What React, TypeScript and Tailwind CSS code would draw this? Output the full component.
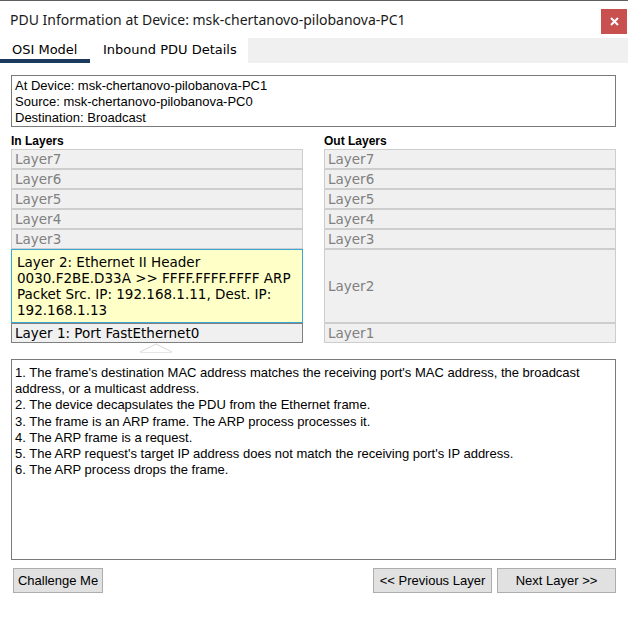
import React from 'react';

const verdana = { fontFamily: '"DejaVu Sans", Verdana, sans-serif' };
const arial = { fontFamily: '"Liberation Sans", Arial, sans-serif' };

const upper = ['Layer7', 'Layer6', 'Layer5', 'Layer4', 'Layer3'];

const descLines = [
  "1. The frame's destination MAC address matches the receiving port's MAC address, the broadcast",
  'address, or a multicast address.',
  '2. The device decapsulates the PDU from the Ethernet frame.',
  '3. The frame is an ARP frame. The ARP process processes it.',
  '4. The ARP frame is a request.',
  "5. The ARP request's target IP address does not match the receiving port's IP address.",
  '6. The ARP process drops the frame.',
];

function LayerRow({ label }: { label: string }) {
  return (
    <div className="h-[20px] border border-[#cdcdcd] bg-[#f0f0f0] pl-[3px] text-[13.5px] leading-[18px] text-[#808080]" style={verdana}>
      {label}
    </div>
  );
}

function Button({ children, className }: { children: React.ReactNode; className?: string }) {
  return (
    <button
      className={`h-[25px] border border-[#adadad] bg-[#e1e1e1] text-[13px] text-black ${className ?? ''}`}
      style={arial}
    >
      {children}
    </button>
  );
}

export default function App() {
  return (
    <div className="w-[628px] h-[622px] bg-white border-t border-[#5f5f5f] overflow-hidden">
      {/* Title bar */}
      <div className="h-[37px] flex items-start justify-between">
        <div className="pl-[10px] pt-[9px] text-[14px] leading-[20px] text-[#1a1a1a]" style={{ fontFamily: '"Noto Sans", "Open Sans", sans-serif' }}>
          PDU Information at Device: msk-chertanovo-pilobanova-PC1
        </div>
        <div className="mt-[8px] mr-[1px] w-[26px] h-[25px] bg-[#c85150] flex items-center justify-center">
          <svg width="9" height="9" viewBox="0 0 9 9">
            <path d="M1 1 L8 8 M8 1 L1 8" stroke="white" strokeWidth="2" />
          </svg>
        </div>
      </div>

      {/* Tabs */}
      <div className="h-[25px] flex text-[13px] text-black" style={verdana}>
        <div className="w-[90px] border-b-4 border-[#1c3a5e] pl-[12px] pt-[3px] leading-[18px]">OSI Model</div>
        <div className="w-[158px] pl-[13px] pt-[3px] leading-[18px]">Inbound PDU Details</div>
        <div className="flex-1 bg-[#f0f0f0]" />
      </div>

      <div className="pl-[11px] pr-[12px]">
        {/* Device info */}
        <div className="mt-[12px] h-[52px] border border-[#7a7a7a] px-[3px] pt-[2px] text-[13px] leading-[16px] text-black" style={arial}>
          <div>At Device: msk-chertanovo-pilobanova-PC1</div>
          <div>Source: msk-chertanovo-pilobanova-PC0</div>
          <div>Destination: Broadcast</div>
        </div>

        {/* Layers */}
        <div className="mt-[6px] flex gap-[21px]">
          <div className="w-[292px]">
            <div className="h-[16px] text-[12px] font-bold leading-[16px] text-black" style={arial}>In Layers</div>
            {upper.map((l) => (
              <LayerRow key={l} label={l} />
            ))}
            <div className="h-[74px] border border-[#3aa7d9] bg-[#ffffc8] pl-[5px] pt-[4px] text-[13.5px] leading-[16px] text-black" style={verdana}>
              <div>Layer 2: Ethernet II Header</div>
              <div>0030.F2BE.D33A &gt;&gt; FFFF.FFFF.FFFF ARP</div>
              <div>Packet Src. IP: 192.168.1.11, Dest. IP:</div>
              <div>192.168.1.13</div>
            </div>
            <div className="h-[20px] border border-[#7f7f7f] bg-[#f0f0f0] pl-[3px] text-[13.5px] leading-[18px] text-black" style={verdana}>
              Layer 1: Port FastEthernet0
            </div>
            <div className="h-[16px] flex justify-center">
              <svg width="34" height="10" viewBox="0 0 34 10" className="ml-[-2px]">
                <path d="M1 9 L17 1 L33 9" fill="none" stroke="#d9d9d9" strokeWidth="1" />
                <path d="M1 9.5 H33" stroke="#e6e6e6" strokeWidth="1" />
              </svg>
            </div>
          </div>

          <div className="w-[292px]">
            <div className="h-[16px] text-[12px] font-bold leading-[16px] text-black" style={arial}>Out Layers</div>
            {upper.map((l) => (
              <LayerRow key={l} label={l} />
            ))}
            <div className="h-[74px] border border-[#cdcdcd] bg-[#f0f0f0] pl-[3px] flex items-center text-[13.5px] text-[#808080]" style={verdana}>
              Layer2
            </div>
            <LayerRow label="Layer1" />
          </div>
        </div>

        {/* Description */}
        <div className="h-[201px] border border-[#7a7a7a] px-[3px] pt-[5px] text-[13px] leading-[16.2px] text-black" style={arial}>
          {descLines.map((d) => (
            <div key={d}>{d}</div>
          ))}
        </div>

        {/* Buttons */}
        <div className="mt-[8px] flex items-center">
          <Button className="ml-[2px] w-[90px]">Challenge Me</Button>
          <div className="flex-1" />
          <Button className="w-[119px]">&lt;&lt; Previous Layer</Button>
          <Button className="ml-[5px] w-[119px]">Next Layer &gt;&gt;</Button>
        </div>
      </div>
    </div>
  );
}
